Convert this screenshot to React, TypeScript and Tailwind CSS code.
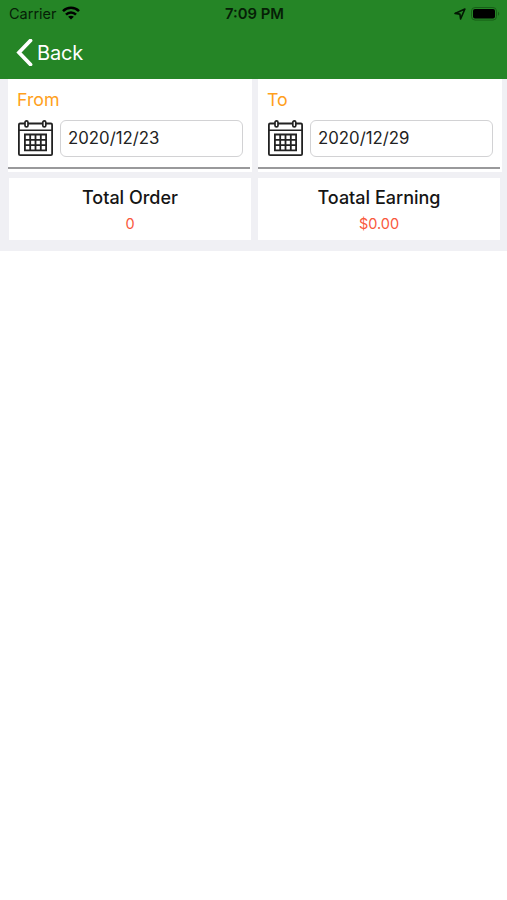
type DateFieldProps = {
  label: string;
  value: string;
};

type SummaryCardProps = {
  title: string;
  value: string;
};

function WifiIcon() {
  return (
    <svg className="mb-[1px]" width="18" height="14" viewBox="0 0 18 14" fill="none" stroke="#000" strokeWidth="2.5">
      <path d="M1 5.2C5.4 0.7 12.6 0.7 17 5.2" />
      <path d="M4 8.6C6.8 5.7 11.2 5.7 14 8.6" />
      <path d="M9 13.6L6.1 10.8C7.8 9.3 10.2 9.3 11.9 10.8Z" fill="#000" stroke="none" />
    </svg>
  );
}

function LocationIcon() {
  return (
    <svg width="12" height="12" viewBox="0 0 12 12" fill="none" stroke="#031803" strokeWidth="1.6" strokeLinejoin="round">
      <path d="M1 5.4L10.9 1L6.6 10.9L5.9 6.1Z" />
    </svg>
  );
}

function BatteryIcon() {
  return (
    <svg width="29" height="14" viewBox="0 0 29 14" fill="none">
      <rect x="0.5" y="0.5" width="25" height="12.6" rx="3.6" stroke="#176017" />
      <rect x="2" y="2" width="22" height="9.6" rx="2" fill="#000" />
      <path d="M27 4.8C28.6 5.4 28.6 8.2 27 8.8Z" fill="#176017" />
    </svg>
  );
}

function CalendarIcon() {
  return (
    <svg className="mb-[1px] shrink-0" width="35" height="36" viewBox="0 0 35 36" fill="none" stroke="#222">
      <rect x="0.9" y="3.5" width="33.2" height="31.6" rx="1.2" strokeWidth="1.8" />
      <path d="M1 10.3H34" strokeWidth="1.4" />
      <rect x="7" y="0.9" width="3" height="6" rx="1.5" fill="#fff" strokeWidth="1.7" />
      <rect x="24.8" y="0.9" width="3" height="6" rx="1.5" fill="#fff" strokeWidth="1.7" />
      <path
        d="M6.9 14.5H28.1V30.4H6.9ZM6.9 19.8H28.1M6.9 25.1H28.1M12.2 14.5V30.4M17.5 14.5V30.4M22.8 14.5V30.4"
        strokeWidth="1.8"
      />
    </svg>
  );
}

function DateField({ label, value }: DateFieldProps) {
  return (
    <div className="h-[93px] w-[244px] bg-white">
      <div className="px-[9px] pt-[9px] text-[17.8px] leading-6 text-[#ff9f1c]">{label}</div>
      <div className="flex items-center gap-[7px] pt-[8px] pl-[9.5px]">
        <CalendarIcon />
        <div className="flex h-[37px] w-[183px] items-center rounded-[6px] border border-[#d2d2d4] pt-[1px] pl-[7.5px] text-[16.8px] text-[#222]">
          {value}
        </div>
      </div>
      <div className="mt-[9.5px] h-[2px] w-[242px] bg-[#99999b]" />
    </div>
  );
}

function SummaryCard({ title, value }: SummaryCardProps) {
  return (
    <div className="flex h-[62px] w-[242px] flex-col items-center bg-white pt-[8px]">
      <div className="text-[18px] leading-6 font-medium text-[#151515]">{title}</div>
      <div className="mt-[4px] text-[14.5px] leading-5 text-[#f9583c]">{value}</div>
    </div>
  );
}

export default function App() {
  return (
    <div className="min-h-[900px] w-[507px] bg-white font-['Inter',sans-serif]">
      <header className="h-[79px] bg-[#258526]">
        <div className="grid h-[27px] grid-cols-3 items-center pr-[7px] pl-[9px] text-[#062006]">
          <div className="flex items-center gap-[5px]">
            <span className="text-[14.5px]">Carrier</span>
            <WifiIcon />
          </div>
          <div className="pt-[1px] text-center text-[14.8px] font-semibold">7:09 PM</div>
          <div className="flex items-center justify-end gap-[5px]">
            <LocationIcon />
            <BatteryIcon />
          </div>
        </div>
        <div className="flex h-[51px] items-center gap-[4px] pl-[16px] text-white">
          <svg width="17" height="27" viewBox="0 0 17 27" fill="none" stroke="#fff" strokeWidth="3.8">
            <path d="M14.5 1.5L3 13.5L14.5 25.5" strokeLinecap="round" />
          </svg>
          <span className="text-[20px] tracking-[-0.2px]">Back</span>
        </div>
      </header>

      <main className="h-[172px] bg-[#f0f0f4]">
        <div className="flex gap-[6px] pl-[8px]">
          <DateField label="From" value="2020/12/23" />
          <DateField label="To" value="2020/12/29" />
        </div>
        <div className="flex gap-[7px] pt-[6px] pl-[9px]">
          <SummaryCard title="Total Order" value="0" />
          <SummaryCard title="Toatal Earning" value="$0.00" />
        </div>
      </main>
    </div>
  );
}
